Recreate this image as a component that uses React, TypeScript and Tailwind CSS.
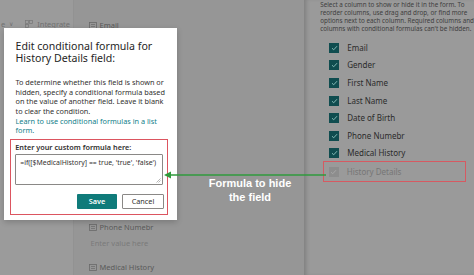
import React from "react";

const Check = ({ disabled }: { disabled?: boolean }) => (
  <div
    className={`w-[10px] h-[10px] flex items-center justify-center shrink-0 ${
      disabled ? "bg-[#8d8d8d]" : "bg-[#0f4c4f]"
    }`}
  >
    <svg width="7" height="6" viewBox="0 0 7 6">
      <path
        d="M1 3.2 L2.7 4.8 L6 1.2"
        fill="none"
        stroke={disabled ? "#a9a9a9" : "#8fc4c0"}
        strokeWidth="0.9"
      />
    </svg>
  </div>
);

const FieldIcon = () => (
  <svg width="8" height="7" viewBox="0 0 8 7" className="shrink-0">
    <rect x="0.5" y="0.5" width="7" height="6" fill="none" stroke="#6a6a6a" strokeWidth="0.8" />
    <line x1="2" y1="2.5" x2="6" y2="2.5" stroke="#6a6a6a" strokeWidth="0.7" />
    <line x1="2" y1="4.5" x2="6" y2="4.5" stroke="#6a6a6a" strokeWidth="0.7" />
  </svg>
);

const columns = [
  "Email",
  "Gender",
  "First Name",
  "Last Name",
  "Date of Birth",
  "Phone Numebr",
  "Medical History",
];

export default function App() {
  return (
    <div className="relative w-[474px] h-[275px] overflow-hidden flex bg-[#969696] font-['Noto_Sans',sans-serif]">
      {/* left column */}
      <div className="w-[73px] h-full bg-[#9b9b9b] flex flex-col">
        <div className="mt-[19px] h-[10px] flex items-center text-[7.5px] leading-[10px] text-[#717171] whitespace-nowrap">
          <span className="ml-[1px]">e</span>
          <span className="ml-[4px] text-[6px]">∨</span>
          <svg width="8" height="8" viewBox="0 0 8 8" className="ml-[12px]">
            <rect x="0.5" y="0.5" width="3" height="3" fill="none" stroke="#777" strokeWidth="0.7" />
            <rect x="4.5" y="0.5" width="3" height="3" fill="none" stroke="#777" strokeWidth="0.7" />
            <rect x="0.5" y="4.5" width="3" height="3" fill="none" stroke="#777" strokeWidth="0.7" />
          </svg>
          <span className="ml-[4px]">Integrate</span>
        </div>
      </div>

      {/* middle column */}
      <div className="w-[233px] h-full flex flex-col pl-[15px] text-[7.5px] leading-[10px] text-[#5a5a5a] border-l border-[#929292]">
        <div className="mt-[20px] flex items-center gap-[3px]">
          <FieldIcon />
          <span>Email</span>
        </div>
        <div className="mt-[192px] flex items-center gap-[3px]">
          <FieldIcon />
          <span>Phone Numebr</span>
        </div>
        <div className="mt-[6px] pl-[2px] text-[#7a7a7a]">Enter value here</div>
        <div className="mt-[14px] flex items-center gap-[3px]">
          <FieldIcon />
          <span>Medical History</span>
        </div>
      </div>

      {/* right panel */}
      <div className="flex-1 h-full bg-[#9a9a9a] shadow-[inset_4px_0_4px_-2px_rgba(0,0,0,0.18)] flex flex-col">
        <p className="pl-[16px] pt-[1px] text-[6.3px] leading-[8px] text-[#3e3e3e] whitespace-nowrap">
          Select a column to show or hide it in the form. To
          <br />
          reorder columns, use drag and drop, or find more
          <br />
          options next to each column. Required columns and
          <br />
          columns with conditional formulas can't be hidden.
        </p>
        <div className="mt-[6px] ml-[25px] flex flex-col">
          {columns.map((c) => (
            <div key={c} className="h-[17.6px] flex items-center gap-[8px]">
              <Check />
              <span className="text-[8px] text-[#2b2b2b]">{c}</span>
            </div>
          ))}
          <div className="-ml-[6px] -mt-[1px] w-[143px] h-[21px] border-[1.5px] border-[#d65a62] pl-[4.5px] flex items-center gap-[8px]">
            <Check disabled />
            <span className="text-[8px] text-[#767676]">History Details</span>
          </div>
        </div>
      </div>

      {/* modal */}
      <div className="absolute left-[4px] top-[28px] w-[173px] h-[192px] bg-white shadow-[0_2px_6px_rgba(0,0,0,0.2)] flex flex-col">
        <div className="pl-[11.5px] pt-[11.5px] text-[10.6px] leading-[12.7px] text-[#252525] whitespace-nowrap">
          Edit conditional formula for
          <br />
          History Details field:
        </div>
        <p className="pl-[11.5px] mt-[13px] text-[7.3px] leading-[9.7px] text-[#323130] whitespace-nowrap">
          To determine whether this field is shown or
          <br />
          hidden, specify a conditional formula based
          <br />
          on the value of another field. Leave it blank
          <br />
          to clear the condition.
          <br />
          <span className="text-[#12808a]">
            Learn to use conditional formulas in a list
            <br />
            form.
          </span>
        </p>
        <div className="ml-[6px] mt-[3px] w-[158px] h-[76px] border-[1.5px] border-[#dc5560] flex flex-col pl-[4.2px] pr-[2.5px]">
          <div className="mt-[1.5px] text-[7.3px] leading-[10px] font-semibold text-[#323130] whitespace-nowrap">
            Enter your custom formula here:
          </div>
          <div className="relative mt-[2.5px] w-[148px] h-[31px] border border-[#8a8886] rounded-[1px] pl-[4px] pt-[3px] text-[6.9px] leading-[9px] text-[#323130] whitespace-nowrap">
            =if([$MedicalHistory] == true, 'true', 'false')
            <svg width="5" height="5" viewBox="0 0 5 5" className="absolute right-[1px] bottom-[1px]">
              <line x1="0.5" y1="4.5" x2="4.5" y2="0.5" stroke="#888" strokeWidth="0.6" />
              <line x1="2.5" y1="4.5" x2="4.5" y2="2.5" stroke="#888" strokeWidth="0.6" />
            </svg>
          </div>
          <div className="mt-[8.5px] flex justify-end gap-[5px] pr-[0.5px]">
            <div className="w-[40px] h-[15.5px] bg-[#0f7b7a] rounded-[1px] flex items-center justify-center text-[7.3px] font-semibold text-white">
              Save
            </div>
            <div className="w-[42px] h-[15.5px] border border-[#8a8886] rounded-[1px] flex items-center justify-center text-[7.3px] text-[#323130]">
              Cancel
            </div>
          </div>
        </div>
      </div>

      {/* arrow */}
      <svg
        width="162"
        height="10"
        viewBox="0 0 162 10"
        className="absolute left-[164px] top-[170px]"
      >
        <line x1="6" y1="5" x2="162" y2="5" stroke="#2f9a3c" strokeWidth="1.5" />
        <polygon points="0,5 7,1.5 7,8.5" fill="#2f9a3c" />
      </svg>

      {/* annotation */}
      <div className="absolute left-[200px] top-[176px] w-[100px] text-center font-['Liberation_Sans',sans-serif] font-bold text-[11px] leading-[14px] text-white">
        Formula to hide
        <br />
        the field
      </div>
    </div>
  );
}
